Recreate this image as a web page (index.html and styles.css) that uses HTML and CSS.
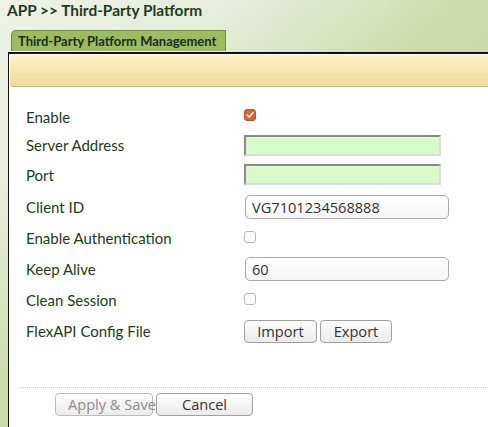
FILE: index.html
```html
<!DOCTYPE html>
<html>
<head>
<meta charset="utf-8">
<link rel="stylesheet" href="styles.css">
</head>
<body>
<div class="title">APP &gt;&gt; Third-Party Platform</div>
<div class="tabs"><div class="tab">Third-Party Platform Management</div></div>
<div class="panel">
  <div class="bar"></div>
  <div class="form">
    <div class="row r-enable"><span class="label">Enable</span><span class="cb checked"><svg viewBox="0 0 12 12" width="12" height="12"><path d="M2.6 6.2 L5 8.5 L9.4 3.4" fill="none" stroke="#fff" stroke-width="1.8" stroke-linecap="round" stroke-linejoin="round"/></svg></span></div>
    <div class="row r-server"><span class="label">Server Address</span><span class="ginput"></span></div>
    <div class="row r-port"><span class="label">Port</span><span class="ginput"></span></div>
    <div class="row r-client"><span class="label">Client ID</span><span class="tinput">VG7101234568888</span></div>
    <div class="row r-auth"><span class="label">Enable Authentication</span><span class="cb"></span></div>
    <div class="row r-keep"><span class="label">Keep Alive</span><span class="tinput">60</span></div>
    <div class="row r-clean"><span class="label">Clean Session</span><span class="cb"></span></div>
    <div class="row r-flex"><span class="label">FlexAPI Config File</span><span class="btns"><span class="btn b-import">Import</span><span class="btn b-export">Export</span></span></div>
  </div>
  <div class="footer">
    <span class="btn b-apply disabled">Apply &amp; Save</span><span class="btn b-cancel">Cancel</span>
  </div>
</div>
</body>
</html>
```
FILE: styles.css
```css
html, body { margin: 0; padding: 0; }
body {
  width: 488px;
  height: 427px;
  overflow: hidden;
  background: linear-gradient(140.7deg, #eef2e4 0%, #e6eddb 24%, #cbdba9 48%, #bcd298 100%);
  font-family: "Lato", "Open Sans", sans-serif;
  color: #1e3a22;
}
.title {
  font-weight: bold;
  font-size: 15.4px;
  line-height: 20px;
  padding: 0 0 0 7px;
  height: 21px;
  color: #1c3b24;
}
.tabs {
  padding: 9px 0 0 11px;
  height: 21px;
}
.tab {
  display: inline-block;
  box-sizing: border-box;
  width: 215px;
  height: 21px;
  background: #9dbb60;
  border: 1px solid #6f8c45;
  border-bottom: none;
  border-top-left-radius: 5px;
  font-weight: bold;
  font-size: 13px;
  line-height: 20px;
  padding-left: 6px;
  color: #13301a;
}
.panel {
  margin: 1px 0 0 8px;
  border-top: 2px solid #111;
  border-left: 1px solid #111;
  background: #fff;
  height: 380px;
}
.bar {
  margin: 1px 0 0 1px;
  height: 31px;
  border-radius: 4px 0 0 4px;
  border-bottom: 1px solid #c7b98a;
  background: linear-gradient(to bottom, #fdf0c6, #f0db97);
}
.form {
  padding-top: 15px;
}
.row {
  display: flex;
  align-items: center;
  font-size: 15px;
  color: #1e3a22;
}
.label {
  width: 218px;
  padding-left: 17px;
  flex: none;
}
.r-enable { height: 29px; }
.r-server { height: 28px; }
.r-port { height: 31px; }
.r-client { height: 33px; }
.r-auth { height: 30px; }
.r-keep { height: 32px; }
.r-clean { height: 30px; }
.r-flex { height: 32px; }
.cb {
  box-sizing: border-box;
  width: 12px;
  height: 12px;
  border: 1px solid #b8b8b8;
  border-radius: 3px;
  background: #fbfbfb;
  display: inline-flex;
  align-items: center;
  justify-content: center;
  margin-top: -3px;
}
.cb.checked {
  background: #d0683c;
  border-color: #b8552d;
}
.cb.checked svg { display: block; }
.ginput {
  box-sizing: border-box;
  width: 197px;
  height: 21px;
  background: #d8fcc9;
  border-top: 2px solid #8a8a8a;
  border-left: 2px solid #8a8a8a;
  border-bottom: 2px solid #dcdcdc;
  border-right: 2px solid #dcdcdc;
}
.tinput {
  box-sizing: border-box;
  width: 204px;
  height: 24px;
  margin-left: 1px;
  border: 1px solid #a9a9a9;
  border-radius: 5px;
  background: linear-gradient(#fff, #f6f6f6);
  font-family: "Open Sans", "DejaVu Sans", sans-serif;
  font-size: 14.6px;
  color: #333;
  line-height: 22px;
  padding-left: 6px;
}
.btns { display: flex; gap: 3px; }
.btn {
  box-sizing: border-box;
  display: inline-block;
  height: 23px;
  border: 1px solid #a0a0a0;
  border-radius: 4px;
  background: linear-gradient(#fdfdfd, #ebebeb);
  font-family: "Open Sans", "DejaVu Sans", sans-serif;
  font-size: 14.6px;
  line-height: 21px;
  color: #333;
  text-align: center;
  white-space: nowrap;
  overflow: hidden;
}
.b-import { width: 73px; }
.b-export { width: 72px; }
.footer {
  margin: 40px 0 0 10px;
  border-top: 1px dotted #cfcfcf;
  padding: 5px 0 0 36px;
  display: flex;
  gap: 3px;
}
.b-apply { width: 98px; color: #8c8c8c; border-color: #bdbdbd; text-align: left; padding-left: 12px; overflow: visible; }
.b-cancel { width: 97px; }
```
